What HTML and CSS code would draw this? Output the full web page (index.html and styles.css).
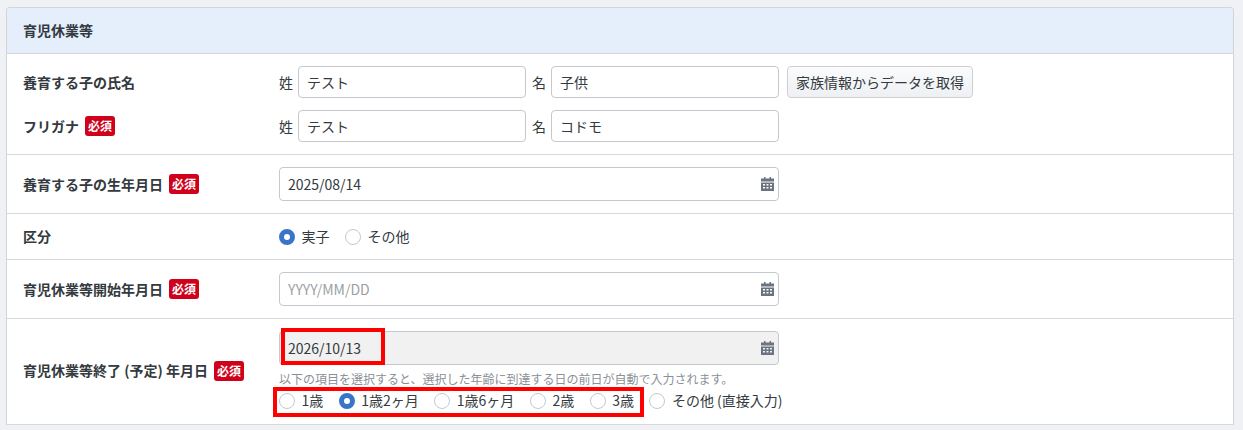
FILE: index.html
```html
<!DOCTYPE html>
<html lang="ja">
<head>
<meta charset="utf-8">
<title>育児休業等</title>
<link rel="stylesheet" href="styles.css">
</head>
<body>
<svg class="defs" width="0" height="0" aria-hidden="true">
  <symbol id="cal" viewBox="0 0 13 14">
    <path fill="#6b7280" d="M3 0h1.500v1.500h4V0H10v1.500h3V4.500H0V1.500h3zM0 5.500h13V14H0zM2 7v1.500h2V7zm3.500 0v1.500h2V7zM9 7v1.500h2V7zM2 10v1.500h2V10zm3.500 0v1.500h2V10zM9 10v1.500h2V10z" fill-rule="evenodd"/>
  </symbol>
</svg>
<section class="card">
  <h2 class="card-head">育児休業等</h2>
  <div class="row stack">
    <div class="line">
      <div class="label">養育する子の氏名</div>
      <div class="fields">
        <span class="prefix">姓</span><input class="input name" value="テスト">
        <span class="prefix second">名</span><input class="input name" value="子供">
        <button class="btn" type="button">家族情報からデータを取得</button>
      </div>
    </div>
    <div class="line">
      <div class="label">フリガナ <span class="req">必須</span></div>
      <div class="fields">
        <span class="prefix">姓</span><input class="input name" value="テスト">
        <span class="prefix second">名</span><input class="input name" value="コドモ">
      </div>
    </div>
  </div>
  <div class="row line">
    <div class="label">養育する子の生年月日 <span class="req">必須</span></div>
    <div class="date"><input class="input tall" value="2025/08/14"><svg class="cal"><use href="#cal"/></svg></div>
  </div>
  <div class="row line">
    <div class="label">区分</div>
    <div class="radios">
      <span class="radio"><i class="dot on"></i>実子</span>
      <span class="radio"><i class="dot"></i>その他</span>
    </div>
  </div>
  <div class="row line">
    <div class="label">育児休業等開始年月日 <span class="req">必須</span></div>
    <div class="date"><input class="input tall" placeholder="YYYY/MM/DD"><svg class="cal"><use href="#cal"/></svg></div>
  </div>
  <div class="row line">
    <div class="label up">育児休業等終了 (予定) 年月日 <span class="req">必須</span></div>
    <div class="col">
      <div class="date"><input class="input tall off" value="2026/10/13" disabled><svg class="cal"><use href="#cal"/></svg><span class="mark mark-date"></span></div>
      <p class="help">以下の項目を選択すると、選択した年齢に到達する日の前日が自動で入力されます。</p>
      <div class="radios tight">
        <span class="radio"><i class="dot"></i>1歳</span>
        <span class="radio"><i class="dot on"></i>1歳2ヶ月</span>
        <span class="radio"><i class="dot"></i>1歳6ヶ月</span>
        <span class="radio"><i class="dot"></i>2歳</span>
        <span class="radio"><i class="dot"></i>3歳</span>
        <span class="radio"><i class="dot"></i>その他 (直接入力)</span>
        <span class="mark mark-radios"></span>
      </div>
    </div>
  </div>
</section>
</body>
</html>
```
FILE: styles.css
```css
* { box-sizing: border-box; }
html, body { height: 430px; overflow: hidden; }
body {
  margin: 0;
  padding: 7px 9px 0 6px;
  background: #f0f1f5;
  color: #333a40;
  font: 14px/21px "Noto Sans CJK JP", "Noto Sans", sans-serif;
}
.defs { position: absolute; }
.card {
  background: #fff;
  border: 1px solid #d0d5dc;
  border-bottom: 0;
  border-radius: 4px 4px 0 0;
}
.card-head {
  margin: 0;
  height: 46px;
  padding: 12px 16px;
  font-size: 14px;
  font-weight: 700;
  line-height: 21px;
  background: #e4effb;
  border-bottom: 1px solid #cfd6de;
  border-radius: 3px 3px 0 0;
}
.row {
  padding: 12px 16px;
  border-bottom: 1px solid #d5d8dd;
}
.stack { display: flex; flex-direction: column; gap: 12px; }
.line { display: flex; align-items: center; }
.label {
  flex: 0 0 256px;
  font-weight: 700;
  font-size: 14px;
  display: flex;
  align-items: center;
  gap: 6px;
}
.label.up { padding-bottom: 2px; }
.req {
  background: #d0021b;
  color: #fff;
  font-size: 12px;
  font-weight: 700;
  line-height: 20px;
  height: 20px;
  padding: 0 3px;
  border-radius: 3px;
}
.fields { display: flex; align-items: center; }
.prefix { width: 19px; }
.prefix.second { width: 25px; padding-left: 6px; }
.input {
  display: block;
  font: inherit;
  color: #333a40;
  border: 1px solid #c4c9cf;
  border-radius: 4px;
  background: #fff;
  padding: 0 8px;
  outline: 0;
}
.input::placeholder { color: #9a9fa6; opacity: 1; }
.name { width: 228px; height: 32px; }
.btn {
  margin-left: 8px;
  height: 32px;
  width: 186px;
  padding: 0;
  font: inherit;
  color: #333a40;
  border: 1px solid #ccd0d5;
  border-radius: 4px;
  background: linear-gradient(#fbfbfc, #eef0f3);
}
.date { position: relative; width: 500px; }
.tall { width: 500px; height: 34px; }
.off { background: #f1f1f1; color: #333a40; -webkit-text-fill-color: #333a40; opacity: 1; }
.cal { position: absolute; right: 5px; top: 10px; width: 13px; height: 14px; }
.radios { display: flex; align-items: center; gap: 15.5px; }
.radio { display: flex; align-items: center; gap: 6.5px; }
.dot {
  width: 16px;
  height: 16px;
  border-radius: 50%;
  border: 1px solid #c4c9cf;
  background: #fff;
}
.dot.on { border: 5px solid #3a74c8; }
.col { display: flex; flex-direction: column; }
.help {
  margin: 0;
  padding-top: 4px;
  font-size: 12px;
  line-height: 20px;
  color: #8b9097;
  white-space: nowrap;
}
.tight { position: relative; height: 23px; }
.mark { position: absolute; border: 4px solid #f00; pointer-events: none; }
.mark-date { left: 2px; top: -3px; width: 104px; height: 37px; }
.mark-radios { left: -6px; top: -2px; width: 371px; height: 30px; }
```
